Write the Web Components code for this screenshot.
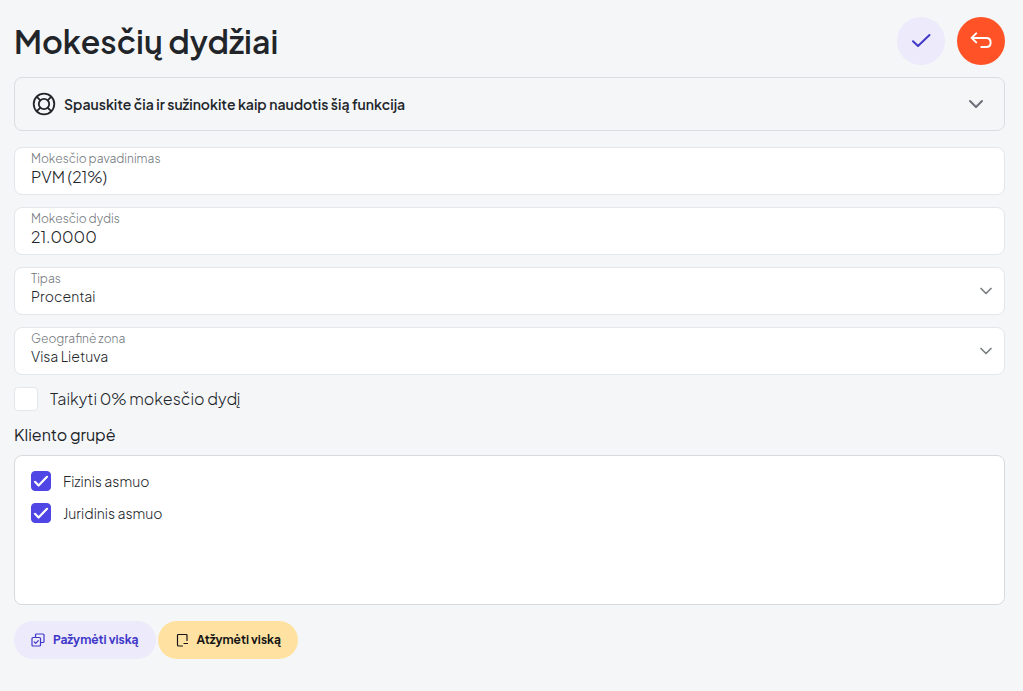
<!DOCTYPE html>
<html lang="lt">
<head>
<meta charset="utf-8">
<meta name="viewport" content="width=device-width, initial-scale=1">
<title>Mokesčių dydžiai</title>
<style>
body { margin: 0; background: #f5f6f8; color: #212529; font-family: "Plus Jakarta Sans", Inter, "Noto Sans", sans-serif; font-size: 16px; }
</style>
</head>
<body>
<tax-form-page></tax-form-page>
<script>
const define = (name, html, setup) => customElements.define(name, class extends HTMLElement {
  connectedCallback() {
    if (this.shadowRoot) return;
    const template = document.createElement('template');
    template.innerHTML = '<style>*{box-sizing:border-box}button,input,select{font:inherit;color:inherit}svg{display:block;flex:none;fill:none;stroke:currentColor;stroke-linecap:round;stroke-linejoin:round}</style>' + html;
    const root = this.attachShadow({ mode: 'open' });
    root.append(template.content.cloneNode(true));
    if (setup) setup(this, root);
  }
});

define('round-button', `
<style>
:host { display: block; }
button { width: 48px; height: 48px; padding: 0; border: 0; border-radius: 50%; display: flex; align-items: center; justify-content: center; background: #eceafb; color: #4038c8; cursor: pointer; }
:host([kind="back"]) button { background: #ff5226; color: #fff; }
</style>
<button type="button"><slot></slot></button>`,
(host, root) => root.querySelector('button').setAttribute('aria-label', host.getAttribute('label')));

define('page-header', `
<style>
:host { display: flex; align-items: center; justify-content: space-between; gap: 12px; }
h1 { margin: 0; font-size: 32px; line-height: 48px; font-weight: 600; }
div { display: flex; gap: 12px; }
svg { stroke-width: 2; }
</style>
<h1><slot></slot></h1>
<div>
  <round-button label="Išsaugoti"><svg width="24" height="24" viewBox="0 0 24 24"><path d="M4 12.2 9 17 20.5 6"/></svg></round-button>
  <round-button kind="back" label="Grįžti"><svg width="24" height="24" viewBox="0 0 24 24"><path d="M7.2 4.4 2.6 8.9 7.2 13.4M2.8 8.9H17.2Q21.6 8.9 21.6 13.3V13.8Q21.6 18 17.2 18H12.3"/></svg></round-button>
</div>`);

define('help-panel', `
<style>
:host { display: block; }
button { display: flex; align-items: center; gap: 8px; width: 100%; height: 54px; padding: 0 20px 0 17px; border: 1px solid #dadde0; border-radius: 8px; background: transparent; text-align: left; font-size: 14px; font-weight: 600; cursor: pointer; }
span { flex: 1; }
.arrow { color: #697077; }
</style>
<button type="button" aria-expanded="false">
  <svg width="24" height="24" viewBox="0 0 24 24" stroke-width="1.8"><circle cx="12" cy="12" r="10.3"/><circle cx="12" cy="12" r="5.2"/><path d="M4.7 4.7 8.3 8.3M15.7 15.7l3.6 3.6M19.3 4.7l-3.6 3.6M8.3 15.7l-3.6 3.6"/></svg>
  <span><slot></slot></span>
  <svg class="arrow" width="16" height="16" viewBox="0 0 16 16" stroke-width="2"><path d="m2 5 6 6 6-6"/></svg>
</button>`);

const fieldStyle = `
<style>
:host { display: block; position: relative; height: 48px; padding: 3px 16px; background: #fff; border: 1px solid #e3e6ea; border-radius: 8px; box-sizing: border-box; }
label { display: block; font-size: 12px; line-height: 16px; font-weight: 300; color: #70757b; }
input, select { display: block; width: 100%; padding: 0; border: 0; outline: 0; background: transparent; font-weight: 300; appearance: none; }
input { font-size: 16px; height: 20px; line-height: 20px; }
select { font-size: 14px; height: 18px; line-height: 18px; }
:host(:focus-within) { border-color: #5046e5; }
svg { position: absolute; right: 11px; top: 16px; color: #7b8085; pointer-events: none; }
</style>`;

define('text-field', fieldStyle + `<label for="control"></label><input id="control" type="text">`,
(host, root) => {
  root.querySelector('label').textContent = host.getAttribute('label');
  root.querySelector('input').value = host.getAttribute('value');
});

define('select-field', fieldStyle + `<label for="control"></label><select id="control"></select>
<svg width="14" height="14" viewBox="0 0 14 14" stroke-width="1.7"><path d="m2 4.5 5 5 5-5"/></svg>`,
(host, root) => {
  root.querySelector('label').textContent = host.getAttribute('label');
  root.querySelector('select').add(new Option(host.getAttribute('value')));
});

define('check-option', `
<style>
:host { display: flex; }
label { display: flex; align-items: center; gap: 12px; font-weight: 300; font-size: 14px; line-height: 24px; cursor: pointer; }
.box { display: grid; flex: none; }
input { grid-area: 1 / 1; appearance: none; width: 20px; height: 20px; margin: 0; border: 1px solid #e3e6ea; border-radius: 4px; background: #fff; }
input:checked { background: #5046e5; border-color: #5046e5; }
svg { grid-area: 1 / 1; color: #fff; pointer-events: none; visibility: hidden; }
input:checked + svg { visibility: visible; }
:host([large]) label { font-size: 16px; }
:host([large]) .box, :host([large]) input { width: 24px; height: 24px; }
</style>
<label><span class="box"><input type="checkbox"><svg width="20" height="20" viewBox="0 0 20 20" stroke-width="2.2"><path d="m4 10.8 3.6 3.7L16 5.8"/></svg></span><span><slot></slot></span></label>`,
(host, root) => { root.querySelector('input').checked = host.hasAttribute('checked'); });

define('check-group', `
<style>
:host { display: block; }
fieldset { margin: 0; padding: 0; border: 0; min-width: 0; }
legend { padding: 0; margin-bottom: 8px; font-size: 16px; line-height: 24px; font-weight: 400; }
.list { display: flex; flex-direction: column; gap: 8px; min-height: 150px; padding: 13px 16px; border: 1px solid #d8dbde; border-radius: 8px; background: #fff; }
</style>
<fieldset><legend></legend><div class="list"><slot></slot></div></fieldset>`,
(host, root) => { root.querySelector('legend').textContent = host.getAttribute('label'); });

define('pill-button', `
<style>
:host { display: block; }
button { display: flex; align-items: center; gap: 8px; height: 38px; padding: 0 17px; border: 0; border-radius: 19px; background: #eceafb; color: #4038c8; font-size: 12px; line-height: 16px; font-weight: 700; white-space: nowrap; cursor: pointer; }
:host([kind="warning"]) button { background: #ffe2a2; color: #151515; }
</style>
<button type="button"><slot name="icon"></slot><slot></slot></button>`);

define('tax-form-page', `
<style>
:host { display: flex; flex-direction: column; gap: 12px; padding: 17px 18px 32px 14px; }
form { display: flex; flex-direction: column; gap: 12px; padding-top: 4px; }
.actions { display: flex; gap: 2px; padding-top: 4px; }
.actions svg { stroke-width: 1.2; }
</style>
<page-header>Mokesčių dydžiai</page-header>
<help-panel>Spauskite čia ir sužinokite kaip naudotis šią funkcija</help-panel>
<form>
  <text-field label="Mokesčio pavadinimas" value="PVM (21%)"></text-field>
  <text-field label="Mokesčio dydis" value="21.0000"></text-field>
  <select-field label="Tipas" value="Procentai"></select-field>
  <select-field label="Geografinė zona" value="Visa Lietuva"></select-field>
  <check-option large>Taikyti 0% mokesčio dydį</check-option>
  <check-group label="Kliento grupė">
    <check-option checked>Fizinis asmuo</check-option>
    <check-option checked>Juridinis asmuo</check-option>
  </check-group>
  <div class="actions">
    <pill-button><svg slot="icon" width="14" height="14" viewBox="0 0 14 14"><path d="M4.5 4.5V2q0-1 1-1H12q1 0 1 1v6.5q0 1-1 1H9.8M2 4.5h6.5q1 0 1 1V12q0 1-1 1H2q-1 0-1-1V5.500q0-1 1-1zM3.3 9l1.4 1.300 2.600-2.700"/></svg>Pažymėti viską</pill-button>
    <pill-button kind="warning"><svg slot="icon" width="14" height="14" viewBox="0 0 14 14"><path d="M12 7.500V2.500q0-1-1-1H3.500q-1 0-1 1v9.500q0 1 1 1H7.500M9 10.500h3.500"/></svg>Atžymėti viską</pill-button>
  </div>
</form>`);
</script>
</body>
</html>
